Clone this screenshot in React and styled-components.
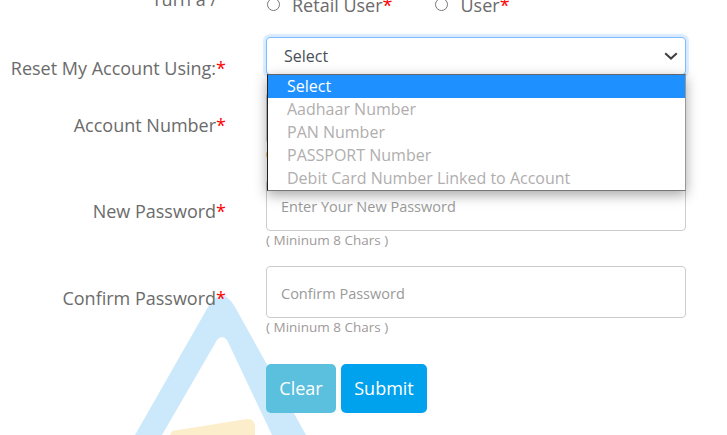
import styled, { createGlobalStyle } from "styled-components"

const GlobalStyle = createGlobalStyle`
    * {
        box-sizing: border-box;
    }

    html, body {
        margin: 0;
        padding: 0;
        background-color: #fff;
        font-family: "Open Sans", "Liberation Sans", sans-serif;
    }
`

const opcoes = [
    "Aadhaar Number",
    "PAN Number",
    "PASSPORT Number",
    "Debit Card Number Linked to Account",
]

function Star() {
    return <Asterisco>*</Asterisco>
}

function Chevron() {
    return (
        <svg width="14" height="8" viewBox="0 0 14 8" fill="none">
            <path d="M1.2 1.2 L7 6.6 L12.8 1.2" stroke="#3f3f3f" strokeWidth="2" />
        </svg>
    )
}

function Marca() {
    return (
        <MarcaStyle width="200" height="145" viewBox="0 0 200 145">
            <path
                d="M5 145 L78 17 Q92 -6 105 17 L176 145 L142 145 L97 50 Q92 44 87 50 L32 145 Z"
                fill="#cce9fb"
            />
            <path d="M40 145 L42 141 L117 129 Q125 129 125 137 L125 145 Z" fill="#fdeecb" />
        </MarcaStyle>
    )
}

export default function App() {
    return (
        <Page>
            <GlobalStyle />
            <Marca />
            <Form>
                <RadioRow>
                    <TopLabel>Turn a /</TopLabel>
                    <Radios>
                        <RadioItem>
                            <input type="radio" name="tipo" />
                            Retail User<Star />
                        </RadioItem>
                        <RadioItem>
                            <input type="radio" name="tipo" />
                            User<Star />
                        </RadioItem>
                    </Radios>
                </RadioRow>

                <SelectRow>
                    <Label $topo="18px">Reset My Account Using:<Star /></Label>
                    <Field>
                        <SelectBox>
                            Select
                            <Chevron />
                        </SelectBox>
                        <Dropdown>
                            <Option $ativo>Select</Option>
                            {opcoes.map((opcao) => (
                                <Option key={opcao}>{opcao}</Option>
                            ))}
                        </Dropdown>
                    </Field>
                </SelectRow>

                <Row>
                    <Label $topo="20px">Account Number<Star /></Label>
                    <Field>
                        <Input type="text" placeholder="Enter Account Number" />
                        <Hint $erro>( Required )</Hint>
                    </Field>
                </Row>

                <Row>
                    <Label>New Password<Star /></Label>
                    <Field>
                        <Input type="password" placeholder="Enter Your New Password" />
                        <Hint>( Mininum 8 Chars )</Hint>
                    </Field>
                </Row>

                <Row>
                    <Label>Confirm Password<Star /></Label>
                    <Field>
                        <Input type="password" placeholder="Confirm Password" />
                        <Hint>( Mininum 8 Chars )</Hint>
                    </Field>
                </Row>

                <Actions>
                    <Button $cor="#5bc0de" $largura="70px">Clear</Button>
                    <Button $cor="#00a2ed" $largura="86px">Submit</Button>
                </Actions>
            </Form>
        </Page>
    )
}

const Page = styled.main`
    position: relative;
    width: 727px;
    height: 435px;
    overflow: hidden;
    background-color: #fff;
`

const MarcaStyle = styled.svg`
    position: absolute;
    left: 130px;
    top: 290px;
`

const Form = styled.form`
    position: relative;
    margin-top: -14px;
    width: 686px;
`

const Row = styled.div`
    display: grid;
    grid-template-columns: 226px 420px;
    column-gap: 40px;
    margin-bottom: 17px;
`

const RadioRow = styled(Row)`
    height: 34px;
`

const SelectRow = styled(Row)`
    position: relative;
    z-index: 2;
    height: 38px;
`

const Label = styled.label`
    display: block;
    padding-top: ${(props) => props.$topo || "19px"};
    font-size: 18px;
    line-height: 27px;
    text-align: right;
    color: #6b6b6b;
    white-space: nowrap;
`

const TopLabel = styled(Label)`
    padding-top: 0;
    padding-right: 9px;
`

const Asterisco = styled.span`
    color: #f00;
`

const Radios = styled.div`
    display: flex;
    gap: 42px;
    padding-top: 5px;
`

const RadioItem = styled.label`
    display: flex;
    align-items: center;
    height: 27px;
    font-size: 18px;
    color: #6b6b6b;

    input {
        width: 13px;
        height: 13px;
        margin: 0 12px 0 1px;
    }
`

const Field = styled.div`
    position: relative;
    min-width: 0;
`

const SelectBox = styled.div`
    display: flex;
    align-items: center;
    justify-content: space-between;
    height: 38px;
    padding: 0 7px 0 17px;
    font-size: 16px;
    color: #495057;
    background-color: #fff;
    border: 1px solid #80bdff;
    border-radius: 4px;
    box-shadow: 0 0 0 3px rgba(0, 123, 255, 0.1), 0 0 6px rgba(0, 123, 255, 0.15);
`

const Dropdown = styled.ul`
    position: absolute;
    top: 37px;
    left: 1px;
    right: 0;
    margin: 0;
    padding: 0;
    list-style: none;
    background-color: #fff;
    border-top: 1px solid #666;
    border-left: 1px solid #222;
    border-right: 1px solid #999;
    border-bottom: 1px solid #767676;
    box-shadow: 0 4px 12px rgba(0, 0, 0, 0.35);
`

const Option = styled.li`
    height: 23px;
    padding-left: 19px;
    font-size: 16px;
    line-height: 23px;
    white-space: nowrap;
    color: ${(props) => (props.$ativo ? "#fff" : "#b0aeae")};
    background-color: ${(props) => (props.$ativo ? "#1e90ff" : "transparent")};
`

const Input = styled.input`
    display: block;
    width: 100%;
    height: 52px;
    padding: 2px 14px 0;
    font-family: inherit;
    font-size: 14.5px;
    color: #495057;
    background-color: #fff;
    border: 1px solid #ccc;
    border-radius: 4px;

    &::placeholder {
        color: #9a9a9a;
        opacity: 1;
    }
`

const Hint = styled.div`
    height: 18px;
    font-size: 13.5px;
    line-height: 18px;
    color: ${(props) => (props.$erro ? "#e08a4a" : "#a09a9a")};
`

const Actions = styled.div`
    display: flex;
    gap: 5px;
    margin-left: 266px;
    margin-top: 28px;
`

const Button = styled.button`
    width: ${(props) => props.$largura};
    height: 49px;
    padding: 0 0 2px;
    font-family: inherit;
    font-size: 18px;
    color: #fff;
    background-color: ${(props) => props.$cor};
    border: none;
    border-radius: 5px;
`
